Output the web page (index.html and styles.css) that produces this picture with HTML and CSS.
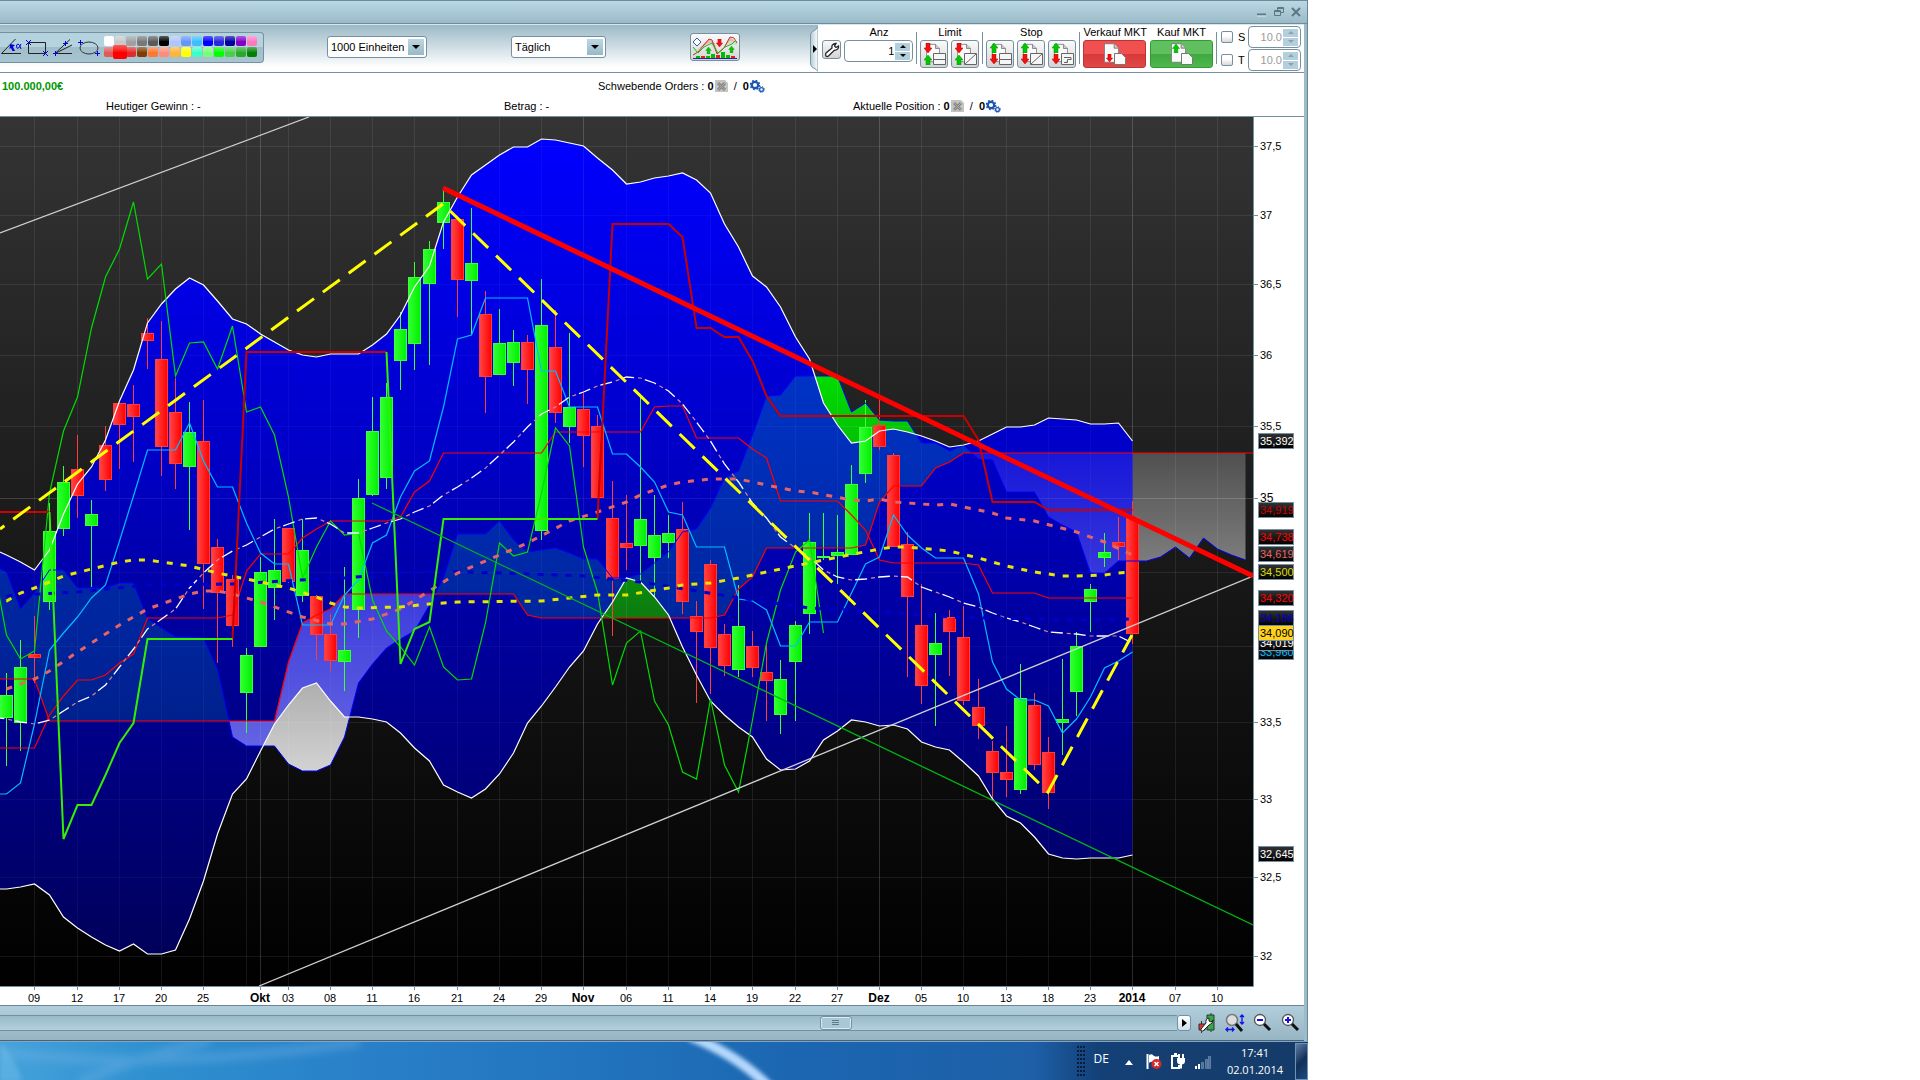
FILE: index.html
```html
<!DOCTYPE html>
<html lang="de">
<head>
<meta charset="utf-8">
<title>Chart - Täglich</title>
<link rel="stylesheet" href="styles.css">
</head>
<body>
<svg class="defs" width="0" height="0" aria-hidden="true">
  <symbol id="up" viewBox="0 0 8 10"><path d="M4 0L8 5H6V10H2V5H0Z" fill="#00c800" stroke="#0a8a0a" stroke-width=".5"/></symbol>
  <symbol id="down" viewBox="0 0 8 10"><path d="M4 10L8 5H6V0H2V5H0Z" fill="#f01010" stroke="#b00" stroke-width=".5"/></symbol>
  <symbol id="page" viewBox="0 0 17 22"><path d="M.5 .5H11.5L16.5 5.500V21.500H.5Z" fill="#fafafa" stroke="#777"/><path d="M11.500 .5V5.500H16.500" fill="#ccc" stroke="#777"/></symbol>
  <symbol id="cancel" viewBox="0 0 13 12"><path d="M0 0H10L13 3V12H0Z" fill="#c4c4c0"/><path d="M3 3L10 10M10 3L3 10" stroke="#858585" stroke-width="3"/><path d="M3 3L10 10M10 3L3 10" stroke="#aaa" stroke-width="1"/></symbol>
  <symbol id="gears" viewBox="0 0 15 13"><circle cx="5" cy="5" r="3.200" fill="none" stroke="#1a55b0" stroke-width="2.200"/><circle cx="5" cy="5" r="4.600" fill="none" stroke="#1a55b0" stroke-width="1.400" stroke-dasharray="1.800 1.810"/><circle cx="11.500" cy="9.500" r="1.900" fill="none" stroke="#1a55b0" stroke-width="1.300"/><circle cx="11.500" cy="9.500" r="2.900" fill="none" stroke="#1a55b0" stroke-width="1" stroke-dasharray="1.100 1.200"/></symbol>
</svg>
<main class="screen">
  <section class="window">
    <header class="titlebar">
      <button type="button" aria-label="Minimieren"><svg width="10" height="10"><path d="M0 7.500H9" stroke="#5d7682" stroke-width="2"/><path d="M0 9H9" stroke="#d9eaf1"/></svg></button>
      <button type="button" aria-label="Wiederherstellen"><svg width="10" height="10"><path d="M3.500 3V.5H9.500V5.500H7M3 1.500H9M.5 3.500H6.500V8.500H.5ZM0 4.500H6" fill="none" stroke="#5d7682"/></svg></button>
      <button type="button" aria-label="Schließen"><svg width="10" height="10"><path d="M1 1L9 9M9 1L1 9" stroke="#5d7682" stroke-width="2"/></svg></button>
    </header>
    <div class="frame">
      <nav class="toolbar">
        <div class="draw">
          <button type="button" aria-label="Winkel"><svg width="26" height="28"><path d="M1.500 19.500H21M1.500 19.500L15.500 5" fill="none" stroke="#222"/><path d="M10 10L15 11L13 13L15 17L12.500 17L11 14L9.500 15Z" fill="#0000e0"/><path d="M21 10Q18 16 17 14Q15.500 10 18 10Q19.500 10 21 15" fill="none" stroke="#0000e0"/></svg></button>
          <button type="button" aria-label="Rechteck"><svg width="26" height="28"><path d="M2.500 8.500H19.500V19.500H2.500Z" fill="none" stroke="#222"/><path d="M0 6L5 11M5 6L0 11M17 17L22 22M22 17L17 22" stroke="#0000e0"/></svg></button>
          <button type="button" aria-label="Fächer"><svg width="26" height="28"><path d="M3 19.500L18 5.500M3 19.500L20 11M3 19.500H20" stroke="#222"/><path d="M1 19.500H6M3.500 17V22M11 9.500H16M13.500 7V12" stroke="#0000e0"/></svg></button>
          <button type="button" aria-label="Ellipse"><svg width="26" height="28"><ellipse cx="11" cy="14" rx="9" ry="6" fill="none" stroke="#333"/><path d="M0 8.500H5M2.500 6V11M17 19.500H22M19.500 17V22" stroke="#0000e0"/></svg></button>
          <div class="swatches">
            <button type="button" class="sw c-white" aria-label="Weiß"></button><button type="button" class="sw c-g1" aria-label="Grau 1"></button><button type="button" class="sw c-g2" aria-label="Grau 2"></button><button type="button" class="sw c-g3" aria-label="Grau 3"></button><button type="button" class="sw c-g4" aria-label="Grau 4"></button><button type="button" class="sw c-black" aria-label="Schwarz"></button><button type="button" class="sw c-b1" aria-label="Blau 1"></button><button type="button" class="sw c-b2" aria-label="Blau 2"></button><button type="button" class="sw c-b3" aria-label="Blau 3"></button><button type="button" class="sw c-b4" aria-label="Blau 4"></button><button type="button" class="sw c-b5" aria-label="Blau 5"></button><button type="button" class="sw c-b6" aria-label="Blau 6"></button><button type="button" class="sw c-purple" aria-label="Violett"></button><button type="button" class="sw c-pink" aria-label="Rosa"></button>
            <button type="button" class="sw c-r1" aria-label="Rot 1"></button><button type="button" class="sw c-red selected" aria-label="Rot"></button><button type="button" class="sw c-r2" aria-label="Rot 2"></button><button type="button" class="sw c-brown" aria-label="Braun"></button><button type="button" class="sw c-o1" aria-label="Orange"></button><button type="button" class="sw c-o2" aria-label="Lachs"></button><button type="button" class="sw c-o3" aria-label="Ocker"></button><button type="button" class="sw c-yellow" aria-label="Gelb"></button><button type="button" class="sw c-teal" aria-label="Türkis"></button><button type="button" class="sw c-n1" aria-label="Grün 1"></button><button type="button" class="sw c-n2" aria-label="Grün 2"></button><button type="button" class="sw c-n3" aria-label="Grün 3"></button><button type="button" class="sw c-n4" aria-label="Grün 4"></button><button type="button" class="sw c-n5" aria-label="Grün 5"></button>
          </div>
        </div>
        <div class="pick units"><select aria-label="Einheiten"><option>1000 Einheiten</option></select><span class="arrow"></span></div>
        <div class="pick period"><select aria-label="Zeitraum"><option>Täglich</option></select><span class="arrow"></span></div>
        <button type="button" class="btn indicators" aria-label="Indikatoren">
          <svg width="46" height="24"><path d="M1 12L5 15L17 4L26 17L32 12L38 3L45 6V11L38 9L32 12L26 20L17 8L6 18L1 20Z" fill="#c4ecc4"/><path d="M5 15L17 4L23 8L26 20L19 7ZM32 12L38 2L45 8L38 6Z" fill="#f5b0b0"/><path d="M1 20L6 17L17 4L20 5L25 19L32 13L38 2L42 3L45 8" fill="none" stroke="#b33"/><path d="M1 12L6 18L12 12L20 8L26 18L33 12L40 9L44 5" fill="none" stroke="#3a3"/><path d="M5 3L7 5L9 7L7 9L5 11L3 9L1 7L3 5Z" fill="#fff" stroke="#2b58b0"/><path d="M4 23V21H8V23ZM14 23V21H18V23ZM19 23V19H23V23ZM29 23V17H33V23ZM34 23V20H38V23Z" fill="#0b0"/><path d="M9 23V21H13V23ZM24 23V20H28V23ZM39 23V21H43V23Z" fill="#d22"/><path d="M1 23.500H45" stroke="#22a"/><use href="#up" x="13" y="12" width="7" height="7"/><use href="#up" x="36" y="11" width="7" height="7"/><use href="#down" x="24" y="4" width="7" height="8"/></svg>
        </button>
        <div class="orders">
          <button type="button" class="handle" aria-label="Einklappen"><svg width="8" height="48"><path d="M8 1.500Q6.500 5 2.500 6.500Q.5 7.500 .5 10V38Q.5 41 2.500 42.500Q6.500 44 8 46.500Z" fill="url(#hg)" stroke="#7b95a2"/><path d="M3 20V28L7 24Z"/><defs><linearGradient id="hg"><stop stop-color="#b0ccd8"/><stop offset="1" stop-color="#fff"/></linearGradient></defs></svg></button>
          <div class="group"><span class="cap"></span><button type="button" class="btn wrench" aria-label="Einstellungen"><svg width="16" height="16"><path d="M2 11L8 6Q7 2 12 1.500L10.500 4L12 5.500L14.500 4Q15 8 10 8.500L4.500 14Q3 15 2 14Q1 12.500 2 11Z" fill="#fff" stroke="#222" stroke-width="1.300"/></svg></button></div>
          <div class="group"><label class="cap" for="anz">Anz</label><div class="spin"><input id="anz" type="text" value="1"><span class="steps"><button type="button" class="inc" aria-label="Mehr"></button><button type="button" class="dec" aria-label="Weniger"></button></span></div></div>
          <i class="sep"></i>
          <div class="group"><span class="cap">Limit</span><div class="row">
            <button type="button" class="btn order" aria-label="Limit 1"><svg width="26" height="26"><use href="#page" x="5" y="2" width="14" height="20"/><use href="#down" x="3" y="2" width="8" height="10"/><use href="#up" x="3" y="14" width="8" height="10"/><path d="M12.500 12.500H24.500V23.500H12.500ZM12 18.500H24" fill="#f6f6f6" stroke="#666"/></svg></button>
            <button type="button" class="btn order" aria-label="Limit 2"><svg width="26" height="26"><use href="#page" x="5" y="2" width="14" height="20"/><use href="#down" x="3" y="2" width="8" height="10"/><use href="#up" x="3" y="14" width="8" height="10"/><path d="M12.500 12.500H24.500V23.500H12.500ZM13 23L24 13" fill="#f6f6f6" stroke="#666"/></svg></button>
          </div></div>
          <i class="sep"></i>
          <div class="group"><span class="cap">Stop</span><div class="row">
            <button type="button" class="btn order" aria-label="Stop 1"><svg width="26" height="26"><use href="#page" x="5" y="2" width="14" height="20"/><use href="#up" x="3" y="2" width="8" height="10"/><use href="#down" x="3" y="13" width="8" height="10"/><path d="M12.500 12.500H24.500V23.500H12.500ZM12 18.500H24" fill="#f6f6f6" stroke="#666"/></svg></button>
            <button type="button" class="btn order" aria-label="Stop 2"><svg width="26" height="26"><use href="#page" x="5" y="2" width="14" height="20"/><use href="#up" x="3" y="2" width="8" height="10"/><use href="#down" x="3" y="13" width="8" height="10"/><path d="M12.500 12.500H24.500V23.500H12.500ZM13 23L24 13" fill="#f6f6f6" stroke="#666"/></svg></button>
            <button type="button" class="btn order" aria-label="Stop 3"><svg width="26" height="26"><use href="#page" x="5" y="2" width="14" height="20"/><use href="#up" x="3" y="2" width="8" height="10"/><use href="#down" x="3" y="13" width="8" height="10"/><path d="M12.500 12.500H24.500V23.500H12.500ZM15 21.500H18.500V18.500H22M15 16.500H22V19" fill="#f6f6f6" stroke="#666"/></svg></button>
          </div></div>
          <i class="sep"></i>
          <div class="group"><label class="cap" for="sell">Verkauf MKT</label><button type="button" id="sell" class="btn market sell"><svg width="24" height="24"><use href="#page" x="1" y="0" width="15" height="22"/><use href="#down" x="3" y="12" width="7" height="8"/><path d="M11.500 11.500H18.500L22.500 15.500V22.500H11.500Z" fill="#fafafa" stroke="#777"/></svg></button></div>
          <div class="group"><label class="cap" for="buy">Kauf MKT</label><button type="button" id="buy" class="btn market buy"><svg width="24" height="24"><use href="#page" x="1" y="0" width="15" height="22"/><use href="#up" x="2" y="2" width="8" height="9"/><path d="M11.500 11.500H18.500L22.500 15.500V22.500H11.500Z" fill="#fafafa" stroke="#777"/></svg></button></div>
          <i class="sep"></i>
          <div class="trail">
            <label><input type="checkbox">S</label>
            <div class="spin off"><input type="text" value="10.0" disabled aria-label="Stop Abstand"><span class="steps"><button type="button" class="inc" aria-label="Mehr"></button><button type="button" class="dec" aria-label="Weniger"></button></span></div>
            <label><input type="checkbox">T</label>
            <div class="spin off"><input type="text" value="10.0" disabled aria-label="Target Abstand"><span class="steps"><button type="button" class="inc" aria-label="Mehr"></button><button type="button" class="dec" aria-label="Weniger"></button></span></div>
          </div>
        </div>
      </nav>
      <div class="info">
        <div class="line first"><b class="cash">100.000,00€</b><span>Schwebende Orders : <b>0</b><svg width="13" height="12"><use href="#cancel"/></svg>&nbsp; / &nbsp;<b>0</b><svg class="gear" width="16" height="13"><use href="#gears" width="15" height="13"/></svg></span></div>
        <div class="line second"><span>Heutiger Gewinn : -</span><span>Betrag : -</span><span>Aktuelle Position : <b>0</b><svg width="13" height="12"><use href="#cancel"/></svg>&nbsp; / &nbsp;<b>0</b><svg class="gear" width="16" height="13"><use href="#gears" width="15" height="13"/></svg></span></div>
      </div>
      <svg id="chart" class="chart" viewBox="0 117 1304 888" role="img" aria-label="Kerzenchart"></svg>
      <footer class="bottom">
        <div class="track"><button type="button" class="thumb" aria-label="Verschieben"><svg width="8" height="8"><path d="M0 1.500H7M0 3.500H7M0 5.500H7" stroke="#5f7a88"/></svg></button></div>
        <button type="button" class="next" aria-label="Weiter"><svg width="5" height="8"><path d="M0 0V8L5 4Z"/></svg></button>
        <div class="tools">
          <button type="button" aria-label="Chart einstellen"><svg width="18" height="20"><path d="M3.500 8V20M13 0V19" stroke="#333"/><path d="M1 11H7V17H1Z" fill="#d33" stroke="#333"/><path d="M9 2H16V17H9Z" fill="#3a4" stroke="#333"/><path d="M3 16L8 10Q7 6 11 5L11 8L13 9L15 7Q15 11 11 12L5 18Q2 19 3 16Z" fill="#fff" stroke="#222"/></svg></button>
          <button type="button" aria-label="Zoom anpassen"><svg width="20" height="20"><circle cx="7" cy="7" r="5.500" fill="#ddd" stroke="#777" stroke-width="1.500"/><path d="M11 11L17 18" stroke="#111" stroke-width="3"/><path d="M17 3V10M15 4L17 2L19 4M15 9L17 11L19 9M1 16.500H9M3 14.500L1 16.500L3 18.500M7 14.500L9 16.500L7 18.500" fill="none" stroke="#11e" stroke-width="1.300"/></svg></button>
          <button type="button" aria-label="Verkleinern"><svg width="20" height="20"><circle cx="7" cy="7" r="5.500" fill="#fff" stroke="#555" stroke-width="1.300"/><path d="M4 7H10" stroke="#11e" stroke-width="2"/><path d="M11 11L17 17" stroke="#111" stroke-width="3"/></svg></button>
          <button type="button" aria-label="Vergrößern"><svg width="20" height="20"><circle cx="7" cy="7" r="5.500" fill="#fff" stroke="#555" stroke-width="1.300"/><path d="M4 7H10M7 4V10" stroke="#11e" stroke-width="2"/><path d="M11 11L17 17" stroke="#111" stroke-width="3"/></svg></button>
        </div>
      </footer>
    </div>
  </section>
  <footer class="taskbar">
    <svg class="glow" width="100%" height="39" aria-hidden="true">
      <defs><filter id="b1" x="-20%" y="-50%" width="140%" height="200%"><feGaussianBlur stdDeviation="2"/></filter><filter id="b2" x="-20%" y="-50%" width="140%" height="200%"><feGaussianBlur stdDeviation="4"/></filter></defs>
      <path d="M690 -6Q740 14 772 48" fill="none" stroke="#b4d8fc" stroke-width="10" filter="url(#b1)"/>
      <path d="M0 0Q15 15 22 39H0Z" fill="#7cc4ee" opacity=".4" filter="url(#b1)"/>
      <path d="M0 10Q150 30 360 0M80 40Q140 14 210 -2" fill="none" stroke="#74b4e6" stroke-width="9" opacity=".4" filter="url(#b2)"/>
    </svg>
    <svg class="grip" width="8" height="31" aria-hidden="true"><path d="M1 0V31M4 0V31M7 0V31" stroke="#071d3a" stroke-width="2" stroke-dasharray="2 2"/></svg>
    <span class="lang">DE</span>
    <svg class="tri" width="8" height="5"><path d="M0 5L4 0L8 5Z" fill="#fff"/></svg>
    <svg class="tray" width="16" height="17"><path d="M1.500 1V16" stroke="#fff" stroke-width="2"/><path d="M3 2Q6 0 8 3Q10 4 13 3V10Q9 11 7 9Q5 8 3 10Z" fill="#fff"/><circle cx="10.500" cy="11" r="5" fill="#d22a2a"/><path d="M8.500 9L12.500 13M12.500 9L8.500 13" stroke="#fff" stroke-width="1.500"/></svg>
    <svg class="tray" width="16" height="17"><path d="M8 3H2V15H9V12" fill="none" stroke="#fff" stroke-width="2"/><path d="M4 1H7" stroke="#fff" stroke-width="2"/><path d="M7 5H15V8Q15 11 12 11.500V15.500H10V11.500Q7 11 7 8Z" fill="#fff"/><path d="M9 1V5M13 1V5" stroke="#fff" stroke-width="2"/></svg>
    <svg class="tray" width="17" height="17"><path d="M1 16V13H3V16ZM4 16V11H6V16Z" fill="#fff"/><path d="M7.500 15.500V9.500H9.500V15.500ZM11.500 15.500V6.500H13.500V15.500ZM14.500 15.500V3.500H16.500V15.500Z" fill="#4a6c93" stroke="#5f80a4"/></svg>
    <time class="clock">17:41<br>02.01.2014</time>
    <button type="button" class="peek" aria-label="Desktop anzeigen"></button>
  </footer>
</main>
<script src="chart.js"></script>
</body>
</html>
```
FILE: styles.css
```css
* { box-sizing: border-box; }
body { margin: 0; background: #fff; font: 11px/14px "Liberation Sans", Arial, sans-serif; color: #000; }
button { padding: 0; border: 0; background: none; font: inherit; color: inherit; display: flex; align-items: center; justify-content: center; }
input, select { font: inherit; color: inherit; }
svg { display: block; }
.defs { position: absolute; }
.screen { margin-right: 612px; min-height: 100vh; display: flex; flex-direction: column; }
.window { border-right: 1px solid #6b8592; }
.titlebar { height: 24px; border-top: 1px solid #6f8b99; border-bottom: 1px solid #6f8b99; background: linear-gradient(#b9d7e4, #9bbac7); display: flex; justify-content: flex-end; align-items: center; gap: 7px; padding-right: 6px; }
.frame { padding-right: 3px; background: #9dbcc9; }

.toolbar { height: 49px; display: flex; align-items: flex-start; border-top: 1px solid #d5e6ee; border-bottom: 1px solid #7590a0; background: linear-gradient(#9bb9c6, #fff 90%); }
.draw { margin-top: 7px; height: 31px; display: flex; padding-right: 6px; border: 1px solid #7590a0; border-left: 0; border-radius: 0 4px 4px 0; background: linear-gradient(#b5d2df 50%, #9fbeca 50%, #a7c5d1); }
.swatches { display: grid; grid-template-columns: repeat(14, 10px); grid-auto-rows: 10px; gap: 1px; margin-top: 3px; }
.sw { border-radius: 2px; background-image: linear-gradient(rgba(255,255,255,.35), rgba(255,255,255,.1) 45%, transparent 50%); }
.sw.selected { width: 14px; height: 14px; margin: -2px; z-index: 1; }
.c-white { background-color: #fff; } .c-g1 { background-color: #c8c8c8; } .c-g2 { background-color: #a0a0a0; } .c-g3 { background-color: #787878; } .c-g4 { background-color: #5a5a5a; } .c-black { background-color: #000; }
.c-b1 { background-color: #b0c4ff; } .c-b2 { background-color: #6496ff; } .c-b3 { background-color: #3cbeff; } .c-b4 { background-color: #0000ff; } .c-b5 { background-color: #2828dc; } .c-b6 { background-color: #0000a0; }
.c-purple { background-color: #8200c8; } .c-pink { background-color: #ff78be; }
.c-r1 { background-color: #e05a5a; } .c-red { background-color: #ff0000; } .c-r2 { background-color: #e62828; } .c-brown { background-color: #823c00; } .c-o1 { background-color: #ff7832; } .c-o2 { background-color: #ff8c78; } .c-o3 { background-color: #ffb43c; }
.c-yellow { background-color: #ffff00; } .c-teal { background-color: #3cffc8; } .c-n1 { background-color: #78ff78; } .c-n2 { background-color: #00ff00; } .c-n3 { background-color: #46d246; } .c-n4 { background-color: #28aa28; } .c-n5 { background-color: #008200; }

.pick { position: relative; margin-top: 11px; height: 22px; }
.pick select { width: 100%; height: 22px; appearance: none; border: 1px solid #7590a0; border-radius: 3px; background: #fff; padding: 0 3px; }
.pick .arrow { position: absolute; right: 3px; top: 3px; width: 16px; height: 16px; background: linear-gradient(#bdd8e4, #98b8c5); pointer-events: none; display: flex; justify-content: center; align-items: center; }
.pick .arrow::after { content: ""; border: 4px solid transparent; border-top-color: #000; border-bottom: 0; }
.units { width: 100px; margin-left: 63px; }
.period { width: 95px; margin-left: 84px; }
.btn { border: 1px solid #7590a0; border-radius: 3px; background: linear-gradient(#fafafa, #d4d4d4); }
.indicators { width: 50px; height: 28px; margin: 8px 0 0 84px; }

.orders { margin-left: auto; height: 47px; display: flex; gap: 3px; padding-right: 3px; background: linear-gradient(90deg, transparent 8px, #fff 8px); }
.handle { width: 8px; margin-right: 1px; }
.group { display: flex; flex-direction: column; }
.cap { height: 15px; line-height: 15px; text-align: center; white-space: nowrap; }
.row { display: flex; gap: 3px; }
.wrench { width: 19px; height: 19px; }
.order { width: 28px; height: 28px; }
.market { width: 63px; height: 28px; }
.sell { background: linear-gradient(#f05050 50%, #d83838 50%, #e04848); border-color: #b33; }
.buy { background: linear-gradient(#60c060 50%, #3fa83f 50%, #4db84d); border-color: #393; }
.sep { width: 1px; height: 32px; margin-top: 7px; background: #7590a0; }
.spin { display: flex; width: 69px; height: 22px; border: 1px solid #7590a0; border-radius: 4px; background: #fff; padding: 2px; align-items: center; }
.spin input { min-width: 0; flex: 1; border: 0; background: none; text-align: right; padding: 0 1px; }
.steps { display: grid; gap: 1px; }
.steps button { width: 15px; height: 8px; background: #b2cfdb; }
.inc::after, .dec::after { content: ""; border: 3px solid transparent; }
.inc::after { border-bottom-color: #000; border-top: 0; }
.dec::after { border-top-color: #000; border-bottom: 0; }
.off { width: 53px; color: #9a9a9a; }
.off .inc::after { border-bottom-color: #8aa2ae; }
.off .dec::after { border-top-color: #8aa2ae; }
.trail { display: grid; grid-template-columns: 28px 53px; grid-auto-rows: 22px; row-gap: 1px; margin-top: 1px; }
.trail label { display: flex; align-items: center; gap: 5px; padding-left: 1px; }
.trail input[type="checkbox"] { appearance: none; margin: 0; width: 12px; height: 12px; border: 1px solid #7590a0; border-radius: 2px; background: linear-gradient(#fff 40%, #d8d8d8); }

.info { height: 44px; padding-top: 3px; border-bottom: 1px solid #7590a0; background: #fff; }
.line { display: grid; height: 20px; align-items: center; white-space: pre; }
.line span { display: flex; align-items: center; }
.first { grid-template-columns: 596px 1fr; padding-left: 2px; }
.second { grid-template-columns: 398px 349px 1fr; padding-left: 106px; }
.cash { color: #009600; }
.line svg { margin-left: 1px; }

.chart { width: 100%; height: auto; background: #fff; font-family: "Liberation Sans", Arial, sans-serif; }

.bottom { height: 36px; display: flex; align-items: flex-start; padding: 9px 3px 0 0; border-top: 1px solid #6b8592; border-bottom: 1px solid #4c6472; background: linear-gradient(#b0cedb, #97b5c2); }
.track { flex: 1; height: 16px; border: 1px solid #7590a0; border-width: 1px 0; background: linear-gradient(#9bbac7, #b2d0dd); padding-left: 63%; }
.thumb { width: 32px; height: 14px; border: 1px solid #7590a0; border-radius: 3px; box-shadow: inset 0 0 0 1px #d8ebf3; background: #a9c8d5; }
.next { width: 14px; height: 16px; border: 1px solid #7590a0; border-radius: 3px; background: linear-gradient(#fff, #cfe2ea); }
.tools { display: flex; gap: 8px; padding-left: 6px; margin-top: -2px; }
.tools button { width: 20px; height: 20px; }

.taskbar { position: relative; height: 39px; display: flex; align-items: center; justify-content: flex-end; color: #fff; font-family: "Open Sans", "Noto Sans", sans-serif; border-top: 1px solid #7fa6cc; background: linear-gradient(90deg, #45a2da 0, #2e8fcf 12%, #2980c8 28%, #2173bd 46%, #1c65b0 62%, #1d60a8 79%, #134077 84%, #163f70 90%, #143a68 100%); }
.glow { position: absolute; left: 0; top: 0; }
.grip { margin-right: 9px; }
.lang { font-size: 12px; margin-right: 16px; margin-top: -5px; }
.tri { margin: 2px 13px 0 0; }
.tray { margin: 1px 8px 0 0; }
.clock { font-size: 11px; line-height: 17px; text-align: center; margin: 0 12px 0 8px; }
.peek { width: 13px; height: 37px; border: 1px solid #6f93b8; background: linear-gradient(135deg, #5f7fa5, #122f58 50%, #1c4a80); }
```
FILE: chart.js
```js
const svg = document.getElementById('chart');
const out = [];
const x = i => Math.floor(6.8 + 14.0755 * i) + 0.5;
// Bars left and right of the visible range share the same spacing.
const runs = (start, ys) => ys.map((y, k) => [x(start + k), y]);
const sparse = list => list.map(([i, y]) => [x(i), y]);
const d = pts => 'M' + pts.map(p => p.join(' ')).join('L');
const line = (pts, stroke, width = 1, extra = '') =>
  out.push(`<path d="${d(pts)}" fill="none" stroke="${stroke}" stroke-width="${width}" ${extra}/>`);
const rep = (v, n) => Array(n).fill(v);

const upper = runs(-1, [549,555,562,570,550,514,484,467,440,401,370,323,304,289,278,285,301,319,324,334,342,350,355,357,354,354,354,345,334,315,287,266,222,197,175,165,155,147,147,139,140,143,146,158,170,184,182,178,176,173,180,193,224,247,276,287,307,337,359,403,425,443,441,431,429,432,436,441,447,445,441,434,427,427,425,418,419,420,424,424,423,441]);
const lower = runs(-1, [889,889,887,884,895,917,928,937,945,951,944,954,954,950,919,881,834,794,779,751,724,705,688,683,701,717,717,719,722,733,748,761,785,792,798,789,774,753,723,706,687,667,651,624,602,578,582,597,615,647,675,701,715,727,737,759,770,769,761,740,731,720,722,726,725,729,742,747,750,762,776,799,816,823,837,854,858,859,858,858,858,855]);
const spanA = runs(-1, [565,572,609,593,570,570,588,588,588,583,583,619,628,637,637,638,669,737,746,746,746,764,771,771,765,737,683,664,648,639,631,605,578,534,534,534,521,540,552,550,548,553,559,559,578,578,574,563,552,532,529,508,478,471,435,396,395,376,376,376,376,412,403,420,421,421,443,443,451,445,459,460,492,492,492,517,525,532,573,573,561,561,561,557,547,558,538,549,555,560]);
const spanB = runs(-1, [679,679,679,679,...rep(721,17),662,623,615,609,...rep(594,13),615,...rep(618,13),615,589,577,...rep(548,7),545,502,486,486,486,468,462,...rep(453,22)]);
const base = runs(-1, [748,748,748,748,715,696,680,680,675,663,654,...rep(618,6),615,571,554,554,554,538,529,...rep(521,5),517,492,481,...rep(453,8),...rep(432,7),407,406,406,...rep(438,4),449,458,...rep(501,5),515,530,560,...rep(563,6),565,...rep(593,4),...rep(598,7)]);
const lag = runs(-1, [560,635,659,651,493,431,397,328,277,249,202,279,264,376,343,342,369,326,412,407,435,497,578,547,521,535,533,600,631,647,665,627,667,680,679,623,543,556,552,493,428,446,547,592,685,643,631,701,725,772,779,699,765,792,720,643,590,552,540,633]);
const conv = runs(-1, [794,794,783,724,650,633,617,598,585,541,496,450,450,450,423,461,487,487,523,553,564,564,625,625,625,595,580,543,535,497,471,461,407,339,335,298,298,298,298,371,371,407,407,407,454,454,467,482,512,515,547,547,547,599,601,610,646,646,622,622,622,593,564,557,515,535,548,558,558,558,594,662,689,700,700,706,733,719,697,668,661,652]);
const mid = runs(-1, [717,719,722,724,720,711,702,696,685,667,649,629,619,609,588,573,560,551,545,537,529,524,519,518,524,533,533,528,523,519,512,506,495,487,478,468,455,442,427,414,407,397,392,386,382,377,378,383,391,404,422,441,464,482,503,518,537,548,557,570,577,580,579,577,576,577,587,592,597,603,607,613,618,622,627,632,633,634,636,636,636,643]);
const yellow = sparse([[-1,604],[0,601],[1,593],[2,588],[3,582],[4,576],[6,569],[8,562],[9,560],[10,560],[13,566],[15,573],[18,582],[20,588],[22,597],[23,603],[24,607],[25,608],[28,607],[30,604],[32,602],[38,601],[42,595],[44,595],[47,588],[48,585],[50,583],[52,578],[54,572],[58,560],[62,549],[63,547],[64,547],[67,551],[69,558],[71,566],[73,572],[75,576],[76,576],[78,575],[79,573],[80,572]]);
const pink = sparse([[0,689],[2,679],[3,671],[5,652],[8,625],[10,609],[12,599],[13,594],[14,591],[15,591],[16,594],[18,602],[21,617],[23,624],[24,624],[26,619],[28,609],[30,591],[32,573],[35,555],[37,543],[40,521],[42,512],[44,502],[45,495],[47,485],[48,482],[50,479],[52,479],[54,485],[56,491],[57,492],[60,500],[61,501],[62,499],[63,502],[66,505],[67,504],[70,513],[71,518],[73,521],[76,532],[78,542],[80,555]]);
const navy = sparse([[-1,597],[1,595],[5,592],[10,585],[16,584],[22,579],[24,578],[28,573],[30,571],[35,573],[41,576],[45,582],[49,591],[53,600],[57,608],[61,611],[63,613],[67,617],[76,620],[80,619]]);

// [high, top, bottom, low, rising]
const candles = [[673,695,718,766,1],[640,667,723,751,1],[616,654,658,683,0],[503,531,602,610,1],[466,482,529,536,1],[435,469,496,518,0],[500,514,526,587,1],[426,445,480,491,0],[403,403,425,469,0],[385,404,417,462,0],[318,333,341,369,0],[321,359,447,476,0],[378,412,464,489,0],[402,432,467,530,1],[400,441,564,609,0],[539,547,593,663,0],[575,579,626,647,0],[648,655,693,733,1],[557,572,647,647,1],[519,570,588,620,1],[528,528,582,583,0],[519,550,596,602,1],[595,596,635,660,0],[614,634,661,671,0],[567,650,662,691,1],[479,498,610,638,1],[397,431,495,496,1],[383,397,478,489,1],[312,329,361,390,1],[262,277,344,370,1],[241,249,284,365,1],[188,202,223,249,1],[219,219,280,317,0],[208,263,281,335,1],[291,314,377,413,0],[309,343,375,375,1],[330,342,363,386,1],[335,342,370,404,0],[279,325,531,540,1],[310,347,413,423,0],[333,407,427,443,1],[393,409,436,467,0],[415,426,498,498,0],[481,518,579,636,0],[495,543,548,570,0],[397,519,546,582,1],[495,535,558,597,1],[515,533,543,558,1],[502,529,602,614,0],[601,616,632,703,0],[560,564,648,694,0],[624,634,666,676,0],[585,626,670,677,1],[631,646,668,677,0],[643,672,681,721,0],[660,679,715,734,1],[621,625,662,721,1],[513,542,614,634,1],[513,556,558,560,1],[515,552,556,584,1],[465,484,555,555,1],[400,427,474,483,1],[398,425,447,450,0],[453,455,547,547,0],[532,544,597,677,0],[584,625,686,704,0],[613,643,655,726,1],[610,617,632,676,0],[606,637,701,705,0],[679,707,726,739,0],[741,751,773,799,0],[726,772,780,797,0],[664,698,790,794,1],[693,705,765,770,0],[737,752,793,809,0],[659,719,723,755,1],[632,646,692,716,1],[584,589,602,632,1],[533,552,558,567,1],[517,542,547,560,0],[501,517,634,644,0]];

// Area where the first line lies above the second one.
function area(a, b) {
  let path = '';
  for (let k = 0; k + 1 < Math.min(a.length, b.length); k++) {
    let [x0, a0] = a[k], [x1, a1] = a[k + 1], b0 = b[k][1], b1 = b[k + 1][1];
    const d0 = b0 - a0, d1 = b1 - a1;
    if (d0 <= 0 && d1 <= 0) continue;
    if (d0 * d1 < 0) {
      const t = d0 / (d0 - d1), xc = x0 + t * (x1 - x0), yc = a0 + t * (a1 - a0);
      if (d0 > 0) { x1 = xc; a1 = b1 = yc; } else { x0 = xc; a0 = b0 = yc; }
    }
    path += `M${x0} ${a0}L${x1} ${a1}L${x1} ${b1}L${x0} ${b0}Z`;
  }
  return path;
}
const grad = (id, y1, y2, stops) => `<linearGradient id="${id}" gradientUnits="userSpaceOnUse" x1="0" x2="0" y1="${y1}" y2="${y2}">${stops.map(([o, c]) => `<stop offset="${o}" stop-color="${c}"/>`).join('')}</linearGradient>`;
const body = (id, a, b) => `<linearGradient id="${id}"><stop stop-color="${a}"/><stop offset="1" stop-color="${b}"/></linearGradient>`;
const band = d(upper.concat([...lower].reverse())) + 'Z';

out.push('<defs>',
  grad('bg', 117, 986, [[0, '#343434'], [.5, '#191919'], [1, '#000']]),
  grad('band', 139, 955, [[0, '#0000ff'], [.38, '#0000c8'], [.68, '#000090'], [1, '#00005a']]),
  grad('gOut', 376, 610, [[0, '#00dc00'], [1, '#0c7e10']]),
  grad('gIn', 376, 720, [[0, '#0033c6'], [1, '#00208e']]),
  grad('wOut', 453, 770, [[0, '#505050'], [1, '#d2d2d2']]),
  grad('wIn', 440, 750, [[0, '#1414d8'], [1, '#6464e2']]),
  grad('tag', 0, 1, [[0, '#333'], [1, '#000']]).replace('gradientUnits="userSpaceOnUse" ', ''),
  body('rise', '#32ff32', '#00f000'), body('fall', '#ff4646', '#ff0000'),
  `<clipPath id="inBand"><path d="${band}"/></clipPath><clipPath id="plot"><rect x="0" y="117" width="1253" height="869"/></clipPath></defs>`);
out.push('<g clip-path="url(#plot)"><rect x="0" y="117" width="1253" height="869" fill="url(#bg)"/>');
const above = area(spanA, spanB), below = area(spanB, spanA);

const dates = [[34,'09'],[77,'12'],[119,'17'],[161,'20'],[203,'25'],[246,''],[260,'Okt',1],[288,'03'],[330,'08'],[372,'11'],[414,'16'],[457,'21'],[499,'24'],[541,'29'],[583,'Nov',1],[626,'06'],[668,'11'],[710,'14'],[752,'19'],[795,'22'],[837,'27'],[879,'Dez',1],[921,'05'],[963,'10'],[1006,'13'],[1048,'18'],[1090,'23'],[1132,'2014',1],[1175,'07'],[1217,'10']];
const prices = [[146,'37,5'],[215,'37'],[284,'36,5'],[355,'36'],[426,'35,5'],[498,'35',1],[572,''],[646,''],[722,'33,5'],[799,'33'],[877,'32,5'],[956,'32']];
function grid(minor, major) {
  const vertical = strong => dates.filter(t => !t[2] === !strong).map(t => `M${t[0] + .5} 117V986`).join('');
  const horizontal = strong => prices.filter(t => !t[2] === !strong).map(t => `M0 ${t[0] + .5}H1253`).join('');
  out.push(`<path d="${vertical(0)}${horizontal(0)}" stroke="#fff" stroke-opacity="${minor}"/><path d="${vertical(1)}${horizontal(1)}" stroke="#fff" stroke-opacity="${major}"/>`);
}
out.push(`<path d="${above}" fill="url(#gOut)"/><path d="${below}" fill="url(#wOut)"/>`);
grid(.08, .17);
out.push(`<path d="${band}" fill="url(#band)"/><g clip-path="url(#inBand)"><path d="${above}" fill="url(#gIn)"/><path d="${below}" fill="url(#wIn)"/>`);
grid(.04, .08);
out.push('</g>');

candles.forEach(([hi, top, bot, lo, up], i) => {
  const c = x(i), col = up ? '#3cff3c' : '#ff3c3c';
  out.push(`<path d="M${c} ${hi}V${lo}" stroke="${col}"/><rect x="${c - 6}" y="${top + .5}" width="12" height="${Math.max(bot - top - 1, 1)}" fill="url(#${up ? 'rise' : 'fall'})" stroke="${col}"/>`);
});

line(spanA, '#0000ff');
line(spanB, '#ff0000', 1.2);
line(base, '#ff0000', 1.2);
line(upper, '#fff', 1.2);
line(lower, '#fff', 1.2);
line(lag, '#00dc00', 1.2);
line(conv, '#00beff', 1.2);
line(mid, '#e08090', 1.2, 'stroke-dasharray="4 19" stroke-dashoffset="-16"');
line(mid, '#fff', 1.3, 'stroke-dasharray="12 11"');
line(navy, '#0000c8', 3, 'stroke-dasharray="6 8"');
line(pink, '#e66464', 3, 'stroke-dasharray="6 8"');
line(yellow, '#e6e600', 3, 'stroke-dasharray="6 8"');

// Stop line: red while the trend falls, green while it rises.
line(sparse([[-1,512],[3,512]]), '#d20000', 2);
line(sparse([[16,639],[17,352],[27,352]]), '#c80000', 2);
line(sparse([[42,519],[43,224],[47,224],[48,237],[49,328],[50,328],[51,337],[52,337],[53,361],[54,396],[55,416],[68,416],[69,440],[70,502],[73,502],[74,510],[80,510]]), '#c80000', 2);
line(sparse([[3,512],[4,839],[5,805],[6,805],[7,775],[8,743],[9,723],[10,639],[16,639]]), '#32f000', 2);
line(sparse([[27,352],[28,664],[29,629],[30,622],[31,519],[42,519]]), '#32f000', 2);

line([[0,233],[309,117]], '#d0d0d0', 1.3);
line([[259,986],[1253,576]], '#d0d0d0', 1.3);
line([[372,503],[1253,925]], '#00b414', 1.3);
line([[443,204],[0,529]], '#ffff00', 3, 'stroke-dasharray="21 11"');
line([[443,204],[1048,792],[1132,635]], '#ffff00', 3, 'stroke-dasharray="21 11" stroke-dashoffset="22"');
line([[443,188],[1253,576]], '#ff0000', 5);
out.push('</g>');

// Axes
out.push('<path d="M0 986.5H1253.500V117" fill="none" stroke="#7590a0"/>');
dates.forEach(([px, text, major]) => {
  if (!text) return;
  out.push(`<path d="M${px + .5} 987V990" stroke="#7590a0"/><text x="${px}" y="1002" text-anchor="middle" font-size="${major ? 12 : 11}" font-weight="${major ? 700 : 400}">${text}</text>`);
});
prices.forEach(([py, text, major]) => {
  if (text) out.push(`<path d="M1254 ${py + .5}H1258" stroke="#7590a0"/><text x="1260" y="${py + 4}" font-size="${major ? 12 : 11}">${text}</text>`);
});
const tag = (cy, text, ink, fill = 'url(#tag)') =>
  out.push(`<rect x="1258.500" y="${cy - 7.5}" width="35" height="15" fill="${fill}" stroke="#7590a0"/><text x="1260" y="${cy + 4}" font-size="11" fill="${ink}">${text}</text>`);
tag(441, '35,392', '#fff');
tag(510, '34,919', '#c80000');
tag(537, '34,738', '#ff0000');
tag(554, '34,619', '#e66464');
tag(572, '34,500', '#dcdc00');
tag(598, '34,320', '#ff0000');
tag(618, '34,186', '#0000c8');
tag(652, '33,960', '#00beff');
tag(643, '34,019', '#fff');
tag(633, '34,090', '#000', '#ffd21e');
tag(854, '32,645', '#fff');
svg.innerHTML = out.join('');
```
